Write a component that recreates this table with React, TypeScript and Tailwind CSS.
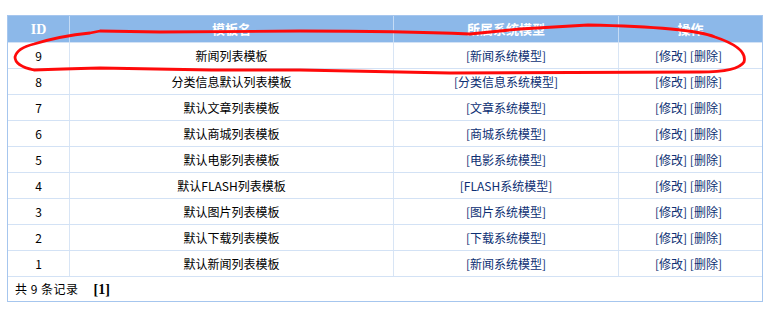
import React from "react";

const rows: [number, string, string][] = [
  [9, "新闻列表模板", "新闻系统模型"],
  [8, "分类信息默认列表模板", "分类信息系统模型"],
  [7, "默认文章列表模板", "文章系统模型"],
  [6, "默认商城列表模板", "商城系统模型"],
  [5, "默认电影列表模板", "电影系统模型"],
  [4, "默认FLASH列表模板", "FLASH系统模型"],
  [3, "默认图片列表模板", "图片系统模型"],
  [2, "默认下载列表模板", "下载系统模型"],
  [1, "默认新闻列表模板", "新闻系统模型"],
];

const font = { fontFamily: '"Noto Sans CJK SC", "DejaVu Sans", sans-serif' };

export default function App() {
  return (
    <div className="relative w-[771px] h-[316px] bg-white text-[12px] text-black" style={font}>
      <div className="absolute left-[7px] top-[15px] w-[756px] border border-[#a6c6ee] bg-white">
        <div className="flex h-[26px] bg-[#8cb8e9] text-white font-bold text-[13px]">
          <div className="w-[62px] border-r border-[#c4dbf5] flex items-center justify-center" style={{ fontFamily: '"Liberation Serif", serif', fontSize: 14 }}>
            ID
          </div>
          <div className="w-[324px] border-r border-[#c4dbf5] flex items-center justify-center">模板名</div>
          <div className="w-[225px] border-r border-[#c4dbf5] flex items-center justify-center">所属系统模型</div>
          <div className="flex-1 flex items-center justify-center">操作</div>
        </div>
        {rows.map(([id, name, model]) => (
          <div key={id} className="flex h-[26px] border-t border-[#d3e2f5]">
            <div className="w-[62px] border-r border-[#d8e5f5] flex items-center justify-center">{id}</div>
            <div className="w-[324px] border-r border-[#d8e5f5] flex items-center justify-center">{name}</div>
            <div className="w-[225px] border-r border-[#d8e5f5] flex items-center justify-center text-[#0d2f73]">
              [{model}]
            </div>
            <div className="flex-1 flex items-center justify-center text-[#0d2f73] pr-[4px]">[修改] [删除]</div>
          </div>
        ))}
        <div className="flex h-[25px] border-t border-[#d3e2f5] items-center pl-[7px]">
          <span className="tracking-[0.5px]">共 9 条记录</span>
          <span className="ml-[15px] font-bold" style={{ fontFamily: '"Liberation Serif", serif', fontSize: 14 }}>
            [1]
          </span>
        </div>
      </div>
      <svg className="absolute left-0 top-0 pointer-events-none" width="771" height="316" viewBox="0 0 771 316">
        <path
          d="M 34 70 Q 15 66 15 57 Q 17 48 34 44 Q 60 36 90 33 L 100 31 L 160 32 L 300 31 Q 400 31 470 34 L 520 29 L 588 25 Q 690 27 715 37 Q 748 48 744 62 Q 738 72 700 72 L 450 73 L 300 70 L 212 70 L 100 68 Q 60 69 34 70"
          fill="none"
          stroke="#ff0a0a"
          strokeWidth="2.8"
          strokeLinejoin="round"
          strokeLinecap="round"
        />
      </svg>
    </div>
  );
}
